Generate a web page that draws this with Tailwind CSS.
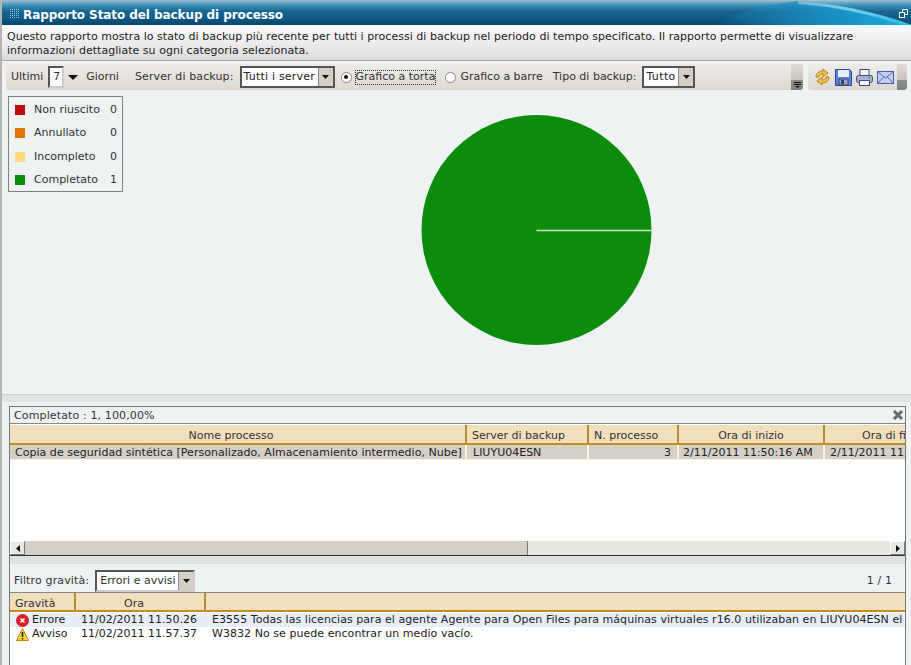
<!DOCTYPE html>
<html><head><meta charset="utf-8"><script src="https://cdn.jsdelivr.net/npm/@tailwindcss/browser@4"></script></head>
<body class="m-0">
<div class="w-[911px] h-[665px] overflow-hidden flex flex-col bg-[#eef2f3] border-l-2 border-t border-[#b4b4b4] text-[11px] leading-[14px] text-[#222] font-['DejaVu_Sans',sans-serif]">
  <!-- title -->
  <div class="relative shrink-0 h-[24px] flex items-center pl-[8px] pt-[3px] overflow-hidden bg-[linear-gradient(#7fbdd8_0%,#3f8fb6_18%,#14648f_45%,#115c86_70%,#07466c_100%)]">
    <svg class="absolute right-0 top-0" width="200" height="24" viewBox="0 0 200 24"><defs><linearGradient id="sw" x1="0" y1="0" x2="1" y2="0"><stop offset="0" stop-color="#1a86b8" stop-opacity="0"/><stop offset="0.45" stop-color="#1a8cc0" stop-opacity="0.8"/><stop offset="1" stop-color="#20aee6"/></linearGradient><linearGradient id="sl" x1="0" y1="0" x2="1" y2="0"><stop offset="0" stop-color="#b4dcea" stop-opacity="0.5"/><stop offset="0.5" stop-color="#6fd2e8"/><stop offset="1" stop-color="#2fb4e6"/></linearGradient></defs><path d="M0 24C20 14 50 4 87 0c40 3 80 12 113 24z" fill="url(#sw)"/><path d="M87 1.5C125 4 165 13 200 25" fill="none" stroke="url(#sl)" stroke-width="3"/></svg>
    <svg class="relative -mt-[3px]" width="9" height="9" viewBox="0 0 9 9" fill="#9cc7dc"><path d="M0 0h1v1H0zM2 0h1v1H2zM4 0h1v1H4zM6 0h1v1H6zM8 0h1v1H8zM0 2h1v1H0zM2 2h1v1H2zM4 2h1v1H4zM6 2h1v1H6zM8 2h1v1H8zM0 4h1v1H0zM2 4h1v1H2zM4 4h1v1H4zM6 4h1v1H6zM8 4h1v1H8zM0 6h1v1H0zM2 6h1v1H2zM4 6h1v1H4zM6 6h1v1H6zM8 6h1v1H8zM0 8h1v1H0zM2 8h1v1H2zM4 8h1v1H4zM6 8h1v1H6zM8 8h1v1H8z"/></svg>
    <span class="relative ml-[4px] text-white font-bold text-[12px] tracking-[-0.08px]">Rapporto Stato del backup di processo</span>
    <svg class="absolute right-[3px] top-[8px]" width="9" height="9" viewBox="0 0 9 9" fill="none" stroke="#fff"><rect x="0.5" y="3.5" width="5" height="5"/><path d="M3.5 3V.5h5v5H6"/></svg>
  </div>
  <!-- description -->
  <div class="shrink-0 h-[36px] pl-[5px] pt-[5px] tracking-[0.033px] bg-[linear-gradient(#fdfdfd,#dcdcdc)] border-b border-[#a9a9a9] mb-[3px]">
    Questo rapporto mostra lo stato di backup più recente per tutti i processi di backup nel periodo di tempo specificato. Il rapporto permette di visualizzare<br>informazioni dettagliate su ogni categoria selezionata.
  </div>
  <!-- toolbar -->
  <div class="shrink-0 h-[26px] flex pl-[4px] pr-[4px] gap-[5px]">
    <div class="relative w-[797px] h-full rounded-[3px] bg-[linear-gradient(#eeece8,#dcd9d2)] flex items-center pl-[5px] text-[#333]">
      <span>Ultimi</span>
      <span class="ml-[5px] w-[16px] h-[22px] border-2 border-[#555] border-r-[#ccc] border-b-[#ccc] bg-white flex items-center pl-[3px]">7</span>
      <svg class="ml-[4px]" width="10" height="5" viewBox="0 0 10 5"><path d="M0 0h10L5 5z" fill="#111"/></svg>
      <span class="ml-[8px]">Giorni</span>
      <span class="ml-[16px] tracking-[0.12px]">Server di backup:</span>
      <div class="ml-[6px] w-[95px] h-[22px] border-2 border-[#555] bg-white flex items-center justify-between pl-[2px] text-[#222]"><span class="tracking-[0.2px]">Tutti i server</span><span class="w-[15px] h-full bg-[#d4d0c8] border-l border-[#888] flex items-center justify-center"><svg width="7" height="4"><path d="M0 0h7L3.5 4z" fill="#111"/></svg></span></div>
      <span class="ml-[6px] w-[11px] h-[11px] rounded-full border border-[#888] bg-white flex items-center justify-center"><span class="w-[4px] h-[4px] rounded-full bg-[#111]"></span></span>
      <span class="ml-[3px] border border-dotted border-[#333] leading-[12px] h-[15px]">Grafico a torta</span>
      <span class="ml-[9px] w-[11px] h-[11px] rounded-full border border-[#888] bg-white"></span>
      <span class="ml-[4px]">Grafico a barre</span>
      <span class="ml-[10px]">Tipo di backup:</span>
      <div class="ml-[6px] w-[53px] h-[22px] border-2 border-[#555] bg-white flex items-center justify-between pl-[2px] text-[#222]"><span class="tracking-[0.4px]">Tutto</span><span class="w-[15px] h-full bg-[#d4d0c8] border-l border-[#888] flex items-center justify-center"><svg width="7" height="4"><path d="M0 0h7L3.5 4z" fill="#111"/></svg></span></div>
      <div class="absolute right-0 top-[0px] h-full w-[12px] rounded-r-[3px] bg-[linear-gradient(#dedbd5,#c9c6bf_60%,#8f8f8f_60%,#808080)] flex items-end justify-center pb-[2px]"><svg width="7" height="6" fill="#fff"><path d="M0 0h7v1H0zM0 2h7v1H0zM1 4h5L3.5 6z" fill="#111"/></svg></div>
    </div>
    <div class="relative flex-1 h-full rounded-[3px] bg-[linear-gradient(#eeece8,#dcd9d2)] flex items-center pl-[6px] gap-[4px]">
      <svg width="17" height="18" viewBox="0 0 17 18" fill="#f2c14a" stroke="#b97f10" stroke-width="1"><path d="M2 9C2 5 5 3 9 3V1l5 4-5 4V6C7 6 5 7 5 9z"/><path d="M15 9c0 4-3 6-7 6v2l-5-4 5-4v3c2 0 4-1 4-3z"/></svg>
      <svg width="17" height="17" viewBox="0 0 17 17"><path d="M.5.5h14l2 2v14H.5z" fill="#5b86d8" stroke="#24459a"/><rect x="3" y="1" width="11" height="7" fill="#e8eefc"/><rect x="4" y="10" width="9" height="6" fill="#9aa6c0" stroke="#33427a"/><rect x="6" y="11" width="3" height="4" fill="#33427a"/></svg>
      <svg width="17" height="17" viewBox="0 0 17 17"><rect x="4" y=".5" width="9" height="7" fill="#fff" stroke="#3d4a84"/><rect x=".5" y="6.5" width="16" height="7" rx="2" fill="#aab3d6" stroke="#3d4a84"/><rect x="3.5" y="11.5" width="10" height="5" fill="#fff" stroke="#3d4a84"/><rect x="12" y="8" width="2" height="2" fill="#3fbf5f"/></svg>
      <svg width="17" height="13" viewBox="0 0 17 13"><rect x=".5" y=".5" width="16" height="12" fill="#c3d0f4" stroke="#4a5db5"/><path d="M1 1l7.5 6L16 1M1 12l5.5-6M16 12l-5.5-6" fill="none" stroke="#4a5db5"/></svg>
      <div class="absolute right-0 top-0 h-full w-[10px] rounded-r-[3px] bg-[linear-gradient(#dedbd5,#c9c6bf_60%,#8f8f8f_60%,#808080)]"></div>
    </div>
  </div>
  <!-- chart -->
  <div class="relative shrink-0 h-[304px] bg-[#eef2f3]">
    <div class="absolute left-[6px] top-[6px] w-[115px] h-[96px] border border-[#808080] pl-[6px] pt-[6px] flex flex-col gap-[9.4px] text-[#333]">
      <div class="flex items-center h-[14px]"><span class="w-[10px] h-[10px] bg-[#bf0c0c]"></span><span class="ml-[9px] flex-1">Non riuscito</span><span class="mr-[5px]">0</span></div>
      <div class="flex items-center h-[14px]"><span class="w-[10px] h-[10px] bg-[#e07408]"></span><span class="ml-[9px] flex-1">Annullato</span><span class="mr-[5px]">0</span></div>
      <div class="flex items-center h-[14px]"><span class="w-[10px] h-[10px] bg-[#ffdb7e]"></span><span class="ml-[9px] flex-1">Incompleto</span><span class="mr-[5px]">0</span></div>
      <div class="flex items-center h-[14px]"><span class="w-[10px] h-[10px] bg-[#0b8c0b]"></span><span class="ml-[9px] flex-1">Completato</span><span class="mr-[5px]">1</span></div>
    </div>
    <svg class="absolute left-[419px] top-[25px]" width="232" height="232" viewBox="0 0 232 232"><circle cx="115.5" cy="115" r="115" fill="#0b8c0b"/><path d="M115.5 115.5H230.5" stroke="#cfe3c8" stroke-width="1.4"/></svg>
  </div>
  <!-- splitter -->
  <div class="shrink-0 h-[8px] bg-[#dfe2e2] border-t border-[#d0d3d3]"></div>
  <div class="h-[4px] shrink-0"></div>
  <!-- panel -->
  <div class="ml-[7px] w-[897px] flex-1 min-h-0 bg-white border border-[#777] border-b-0 flex flex-col">
    <div class="shrink-0 h-[17px] bg-[#eef2f3] border-b border-[#888] flex items-center justify-between pl-[4px] pr-[1px] text-[#333]"><span class="tracking-[0.13px] mt-[1px]">Completato : 1, 100,00%</span><svg width="12" height="12" viewBox="0 0 12 12"><path d="M2 2l8 8M10 2l-8 8" stroke="#666" stroke-width="3"/></svg></div>
    <div class="shrink-0 h-[20px] mt-[1px] flex bg-[#f2dfbb] border-b-2 border-[#c98a1e] overflow-hidden text-[#333]">
      <div class="w-[457px] shrink-0 pr-[13px] text-center border-r-2 border-[#b58a3e] leading-[21px]">Nome processo</div>
      <div class="w-[122px] shrink-0 pl-[5px] border-r-2 border-[#b58a3e] leading-[21px]">Server di backup</div>
      <div class="w-[90px] shrink-0 pl-[5px] border-r-2 border-[#b58a3e] leading-[21px]">N. processo</div>
      <div class="w-[146px] shrink-0 text-center border-r-2 border-[#b58a3e] leading-[21px]">Ora di inizio</div>
      <div class="flex-1 min-w-0 pl-[37px] leading-[21px] whitespace-nowrap overflow-hidden">Ora di fine</div>
    </div>
    <div class="shrink-0 h-[15px] flex bg-[#d4d0c8] border-b border-[#fbf3da] overflow-hidden whitespace-nowrap leading-[15px] text-[#222]">
      <div class="w-[457px] shrink-0 pl-[5px] tracking-[0.03px] border-r-2 border-[#fbf3da]">Copia de seguridad sintética [Personalizado, Almacenamiento intermedio, Nube]</div>
      <div class="w-[122px] shrink-0 pl-[6px] border-r-2 border-[#fbf3da]">LIUYU04ESN</div>
      <div class="w-[90px] shrink-0 text-right pr-[6px] border-r-2 border-[#fbf3da]">3</div>
      <div class="w-[146px] shrink-0 pl-[4px] border-r-2 border-[#fbf3da]">2/11/2011 11:50:16 AM</div>
      <div class="flex-1 min-w-0 pl-[5px] overflow-hidden">2/11/2011 11:50:16 AM</div>
    </div>
    <div class="h-[81px] shrink-0"></div>
    <!-- scrollbar -->
    <div class="shrink-0 h-[15px] flex bg-[#e8e6e1] border-b border-[#333]">
      <div class="w-[15px] h-[14px] bg-[#ebe9e4] border border-[#777] border-t-white border-l-white flex items-center justify-center"><svg width="4" height="7"><path d="M4 0v7L0 3.5z" fill="#111"/></svg></div>
      <div class="w-[503px] bg-[#d4d0c8] border-r border-[#777]"></div>
      <div class="flex-1"></div>
      <div class="w-[15px] h-[14px] bg-[#ebe9e4] border border-[#777] border-t-white border-l-white flex items-center justify-center"><svg width="4" height="7"><path d="M0 0v7l4-3.5z" fill="#111"/></svg></div>
    </div>
    <div class="shrink-0 h-[8px] bg-[#dfe2e2]"></div>
    <!-- filter -->
    <div class="shrink-0 h-[28px] bg-[#eef2f3] flex items-center justify-between pl-[4px] pr-[13px] pt-[6px] text-[#333]">
      <div class="flex items-center"><span class="tracking-[0.15px]">Filtro gravità:</span><div class="ml-[6px] w-[100px] h-[22px] border-2 border-[#555] border-r-[#ccc] border-b-[#ccc] bg-white flex items-center justify-between pl-[3px]"><span>Errori e avvisi</span><span class="w-[15px] h-full bg-[#d4d0c8] border-l border-[#888] flex items-center justify-center"><svg width="7" height="4"><path d="M0 0h7L3.5 4z" fill="#111"/></svg></span></div></div>
      <span class="tracking-[0.1px]">1 / 1</span>
    </div>
    <div class="shrink-0 h-[20px] flex bg-[#f2dfbb] border-t border-[#888] border-b-2 border-b-[#c98a1e] text-[#333]">
      <div class="w-[66px] pl-[5px] border-r-2 border-[#b58a3e] leading-[21px]">Gravità</div>
      <div class="w-[130px] text-center pr-[12px] border-r-2 border-[#b58a3e] leading-[21px]">Ora</div>
    </div>
    <div class="shrink-0 h-[14px] mt-[1px] flex items-center bg-[#e8eef7] whitespace-nowrap overflow-hidden">
      <svg class="ml-[6px] shrink-0" width="13" height="13" viewBox="0 0 13 13"><circle cx="6.5" cy="6.5" r="6.5" fill="#d81f26"/><path d="M4.5 4.5l4 4M8.5 4.5l-4 4" stroke="#fff" stroke-width="1.5"/></svg>
      <span class="ml-[3px] w-[49px] shrink-0">Errore</span><span class="w-[131px] shrink-0">11/02/2011 11.50.26</span><span class="tracking-[0.05px]">E3555 Todas las licencias para el agente Agente para Open Files para máquinas virtuales r16.0 utilizaban en LIUYU04ESN el</span>
    </div>
    <div class="shrink-0 h-[14px] flex items-center whitespace-nowrap overflow-hidden">
      <svg class="ml-[6px] shrink-0" width="13" height="13" viewBox="0 0 13 13"><path d="M6.5.5l6 12H.5z" fill="#f6cf3a" stroke="#c48a10"/><path d="M6.5 4v5M6.5 10v1.5" stroke="#222" stroke-width="1.5"/></svg>
      <span class="ml-[3px] w-[49px] shrink-0">Avviso</span><span class="w-[131px] shrink-0">11/02/2011 11.57.37</span><span class="tracking-[0.05px]">W3832 No se puede encontrar un medio vacío.</span>
    </div>
  </div>
</div>
</body></html>
